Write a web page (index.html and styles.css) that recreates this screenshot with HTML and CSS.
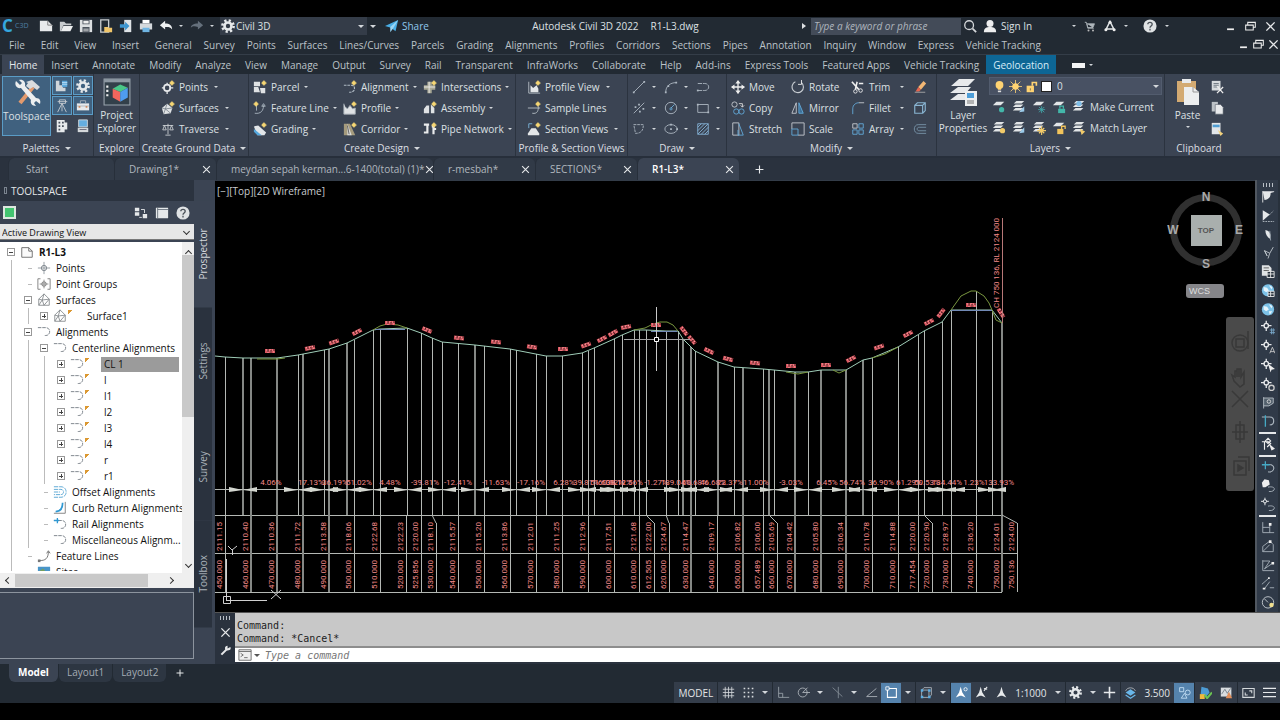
FILE: index.html
```html
<!DOCTYPE html>
<html lang="en">
<head>
<meta charset="utf-8">
<title>Autodesk Civil 3D 2022 - R1-L3.dwg</title>
<link rel="stylesheet" href="styles.css">
</head>
<body>
<svg class="defs" aria-hidden="true">
<symbol id="star" viewBox="0 0 8 8"><circle cx="4" cy="4" r="2.6" fill="#f7d774"/><path d="M4 0v8M0 4h8" stroke="#f7d774" stroke-width=".8"/></symbol>
<symbol id="new" viewBox="0 0 16 16"><path d="M1 2h9l5 5v7H1z" fill="#e8eaec"/><path d="M10 2v5h5" fill="none" stroke="#777"/></symbol>
<symbol id="open" viewBox="0 0 16 16"><path d="M1 14V3h5l2 2h6v2H5L2 14z" fill="#c7cbce"/><path d="M5 8h11l-3 6H2z" fill="#eceeef"/></symbol>
<symbol id="save" viewBox="0 0 16 16"><path d="M1 1h14v14H1z" fill="#dcdfe1"/><path d="M4 1h8v5H4zM4 9h8v6H4z" fill="#4a525c"/><path d="M5 2h6v3H5zM5 11h6v1H5zM5 13h6v1H5z" fill="#eee"/></symbol>
<symbol id="saveweb" viewBox="0 0 16 16"><path d="M2 1h9v14H2z" fill="none" stroke="#c9cdd0" stroke-width="1.5"/><path d="M6 9h4l1 1h4v5H6z" fill="#f0c56a"/></symbol>
<symbol id="import" viewBox="0 0 16 16"><path d="M6 1h8v14H6z" fill="#dfe3e6"/><path d="M1 6h6V3l5 5-5 5v-3H1z" fill="#3d95cf"/></symbol>
<symbol id="print" viewBox="0 0 16 16"><path d="M4 1h8v4H4z" fill="#fff"/><path d="M1 5h14v7H1z" fill="#d5d9dc"/><path d="M4 10h8v5H4z" fill="#6fb4e2"/></symbol>
<symbol id="undo" viewBox="0 0 16 16"><path d="M1 7l6-5v3c5 0 8 2 8 7-2-3-4-3-8-3v3z" fill="#eef0f1"/></symbol>
<symbol id="redo" viewBox="0 0 16 16"><path d="M15 7L9 2v3C4 5 1 7 1 10c2-2 4-2 8-1v3z" fill="#65707c"/></symbol>
<symbol id="gear" viewBox="0 0 16 16"><circle cx="8" cy="8" r="6.400" fill="none" stroke="#e6e9eb" stroke-width="3" stroke-dasharray="2.500 2.526"/><circle cx="8" cy="8" r="4" fill="none" stroke="#e6e9eb" stroke-width="3"/></symbol>
<symbol id="plane" viewBox="0 0 16 16"><path d="M0 8L15 1l-3 13-5-4z" fill="#49aee6"/><path d="M15 1L6 9v6l3-4" fill="#9bd6f5"/></symbol>
<symbol id="mag" viewBox="0 0 16 16"><circle cx="7" cy="7" r="5" fill="none" stroke="#d5d8db" stroke-width="1.5"/><path d="M11 11l4 4" stroke="#d5d8db" stroke-width="2"/></symbol>
<symbol id="user" viewBox="0 0 16 16"><circle cx="8" cy="5" r="4" fill="#eee"/><path d="M1 15c0-5 3-6 7-6s7 1 7 6z" fill="#eee"/></symbol>
<symbol id="cart" viewBox="0 0 16 16"><path d="M1 3h2l2 8h8M4 5h10l-2 5H5z" fill="#aeb5bb" stroke="#aeb5bb"/><circle cx="6" cy="14" r="1.3" fill="#bbb"/><circle cx="12" cy="14" r="1.3" fill="#bbb"/></symbol>
<symbol id="adsk" viewBox="0 0 16 16"><path d="M8 2l5 10H3z" fill="none" stroke="#e3e6e8" stroke-width="2"/><circle cx="8" cy="3" r="2" fill="#eee"/><circle cx="2.500" cy="13" r="2" fill="#eee"/><circle cx="13.500" cy="13" r="2" fill="#eee"/></symbol>
<symbol id="help" viewBox="0 0 16 16"><circle cx="8" cy="8" r="7.500" fill="#dfe2e4"/><path d="M5.500 6c0-3 5-3 5 0 0 2-2.500 2-2.500 4M8 11v2" fill="none" stroke="#4a5158" stroke-width="1.5"/></symbol>
<symbol id="min" viewBox="0 0 16 16"><path d="M3 12h10" stroke="#eee" stroke-width="2.500"/></symbol>
<symbol id="rest" viewBox="0 0 16 16"><path d="M4 5V2h11v7h-3M1 6h11v7H1z" fill="none" stroke="#eee" stroke-width="1.5"/></symbol>
<symbol id="x" viewBox="0 0 16 16"><path d="M2 2l12 12M14 2L2 14" stroke="#e6e8ea" stroke-width="2"/></symbol>
<symbol id="tools" viewBox="0 0 28 28"><path d="M7 24L20 8" stroke="#e39a6d" stroke-width="4"/><path d="M13 3l6-2 8 7-3 3-4-3-3 2-4-3 2-3z" fill="#d9dcde"/><path d="M3 2l4 4 2-2-3-3c4-1 7 2 6 6l11 12c4 0 5 3 4 6l-4-3-2 2 2 3c-4 0-6-3-5-6L8 9C4 10 1 6 3 2z" fill="#eceeef"/></symbol>
<symbol id="prosp" viewBox="0 0 16 16"><path d="M1 2h4v5h4v3h3v4H1z" fill="#cfd5da"/><path d="M8 2h6v7H8z" fill="#5ca9dc"/><path d="M8 4h6M8 6h6" stroke="#b8dcf3"/></symbol>
<symbol id="survey" viewBox="0 0 16 16"><path d="M5 1h7v4H5zM3 3h11M8 5L3 15M8 5l5 10M8 5v9" fill="none" stroke="#c6ccd1"/></symbol>
<symbol id="box" viewBox="0 0 16 16"><path d="M1 5h14v8H1z" fill="#e7eaec"/><path d="M5 5V2h6v3M1 8h14" fill="none" stroke="#aab3bb"/><path d="M3 9h2M11 9h2" stroke="#d18b5f" stroke-width="2"/></symbol>
<symbol id="bldg" viewBox="0 0 16 16"><path d="M2 1h9v3h3v8h-3v3H2z" fill="#e7eaec"/><path d="M4 3h2v2H4zM8 3h2v2H8zM4 7h2v2H4zM8 7h2v2H8zM4 11h2v2H4z" fill="#48515d"/></symbol>
<symbol id="pc" viewBox="0 0 16 16"><path d="M3 1h10v8H3z" fill="#65aee0" stroke="#d4d8db"/><path d="M2 10h12v5H2z" fill="#d4d8db"/><path d="M4 12h8" stroke="#667"/></symbol>
<symbol id="explorer" viewBox="0 0 26 26"><path d="M1 1h24v24H1z" fill="#33404a" stroke="#9aa4ae"/><path d="M1 1h24v3H1z" fill="#8d98a2"/><path d="M3 7h2v2H3zM3 11h2v2H3zM3 15h2v2H3z" fill="#eee"/><path d="M9 10l7-4 7 3-7 4z" fill="#49c788"/><path d="M9 10l7 3v9l-7-4z" fill="#f2665d"/><path d="M16 13l7-4v9l-7 4z" fill="#4f9df0"/></symbol>
<symbol id="point" viewBox="0 0 16 16"><circle cx="7" cy="9" r="3.600" fill="none" stroke="#e5e7e9" stroke-width="2"/><path d="M7 3v3M7 12v4M1 9h3M10 9h4" stroke="#e5e7e9" stroke-width="1.5"/><use href="#star" x="9" width="7" height="7"/></symbol>
<symbol id="surf" viewBox="0 0 16 16"><path d="M1 8l6-5 6 5-2 6-8 1z" fill="#dfe2e4"/><path d="M7 3L5 9l-4-1M5 9l6 5M5 9l8-1M5 9l-2 6" stroke="#6c7580" fill="none" stroke-width=".8"/><use href="#star" x="9" width="7" height="7"/></symbol>
<symbol id="trav" viewBox="0 0 16 16"><path d="M2 4h12M8 2v12M4 4L2 9h4zM12 4l-2 5h4zM5 15h6" fill="none" stroke="#cbd0d4"/></symbol>
<symbol id="parcel" viewBox="0 0 16 16"><path d="M1 2h7v5H1zM1 8h5l2 6H1zM8 9h6v6H9z" fill="#dfe2e4"/><use href="#star" x="9" width="7" height="7"/></symbol>
<symbol id="fline" viewBox="0 0 16 16"><path d="M2 14c7 1 10-3 10-9M4 4v7M12 3l2 3h-4z" fill="none" stroke="#aeb9c3"/><use href="#star" width="7" height="7"/></symbol>
<symbol id="grad" viewBox="0 0 16 16"><path d="M1 5l5-1 9 8-2 3H5z" fill="#e2e6e9"/><path d="M1 8l9 7H5L1 11z" fill="#55a7dd"/><use href="#star" x="9" width="7" height="7"/></symbol>
<symbol id="align" viewBox="0 0 16 16"><path d="M1 6h8q5 0 4 5-1 3-6 3" fill="none" stroke="#aeb9c3" stroke-width="1.300" stroke-dasharray="3 1"/><use href="#star" x="9" width="7" height="7"/></symbol>
<symbol id="prof" viewBox="0 0 16 16"><path d="M1 3v12h13V8l-3 1-3-4-3 4-2-2" fill="#dfe2e4" stroke="#a8b0b7"/><use href="#star" x="9" width="7" height="7"/></symbol>
<symbol id="corr" viewBox="0 0 16 16"><path d="M1 2h7l6 13H1z" fill="#a59b7d"/><path d="M5 2l5 13H5z" fill="#dcdddd"/><path d="M5 4l2 10" stroke="#555"/><use href="#star" x="9" width="7" height="7"/></symbol>
<symbol id="inter" viewBox="0 0 16 16"><path d="M5 2h5v4h4v5h-4v4H5v-4H1V6h4z" fill="#a8a795"/><path d="M7 2v13M1 8h13" stroke="#eee"/><use href="#star" x="9" width="7" height="7"/></symbol>
<symbol id="assem" viewBox="0 0 16 16"><path d="M1 9l3-4h3v9H1zM9 4l4 4v6H9z" fill="#dfe2e4"/><use href="#star" x="9" width="7" height="7"/></symbol>
<symbol id="pipe" viewBox="0 0 16 16"><path d="M1 3h6M5 3v9H1M10 5h2v9M12 8h3" fill="none" stroke="#e9ebec" stroke-width="2.500"/><use href="#star" x="9" width="7" height="7"/></symbol>
<symbol id="pview" viewBox="0 0 16 16"><path d="M2 2v13h13" fill="none" stroke="#b9c1c8"/><path d="M4 14V6l3 3 4-3 2 4v4z" fill="#e3e6e8"/><use href="#star" x="9" width="7" height="7"/></symbol>
<symbol id="sline" viewBox="0 0 16 16"><path d="M1 8h14M6 14c6 1 7-3 7-8" fill="none" stroke="#b9c1c8"/><use href="#star" x="9" width="7" height="7"/></symbol>
<symbol id="sview" viewBox="0 0 16 16"><path d="M1 13l4-6h5l4 6v2H1z" fill="#e3e6e8"/><path d="M2 7V2h4" fill="none" stroke="#7bb6dd"/><use href="#star" x="9" width="7" height="7"/></symbol>
<symbol id="line" viewBox="0 0 16 16"><path d="M2 14L14 2" stroke="#aeb8c2"/><path d="M1 13h2v2H1zM13 1h2v2h-2z" fill="#aeb8c2"/></symbol>
<symbol id="arc" viewBox="0 0 16 16"><path d="M2 14C2 7 7 3 14 3" fill="none" stroke="#aeb8c2"/><path d="M1 13h2v2H1zM13 2h2v2h-2zM4 6h2v2H4z" fill="#aeb8c2"/></symbol>
<symbol id="pline" viewBox="0 0 16 16"><path d="M2 4h8c6 0 6 8 0 8H2" fill="none" stroke="#aeb8c2" stroke-dasharray="5 1"/><path d="M1 11h2v2H1z" fill="#aeb8c2"/></symbol>
<symbol id="divide" viewBox="0 0 16 16"><path d="M2 14L14 2" stroke="#aeb8c2"/><path d="M3 6h2v2H3zM7 3h2v2H7zM8 11h2v2H8zM12 8h2v2h-2z" fill="#aeb8c2"/></symbol>
<symbol id="circ" viewBox="0 0 16 16"><circle cx="8" cy="8" r="6.500" fill="none" stroke="#aeb8c2"/><path d="M8 8l4-4M7 8h2v2H7z" stroke="#6eb1de"/></symbol>
<symbol id="rect" viewBox="0 0 16 16"><path d="M2 4h12v9H2z" fill="none" stroke="#aeb8c2"/><path d="M1 3h2v2H1zM13 12h2v2h-2z" fill="#aeb8c2"/></symbol>
<symbol id="curve" viewBox="0 0 16 16"><path d="M2 3h11c0 7-3 10-9 10z" fill="none" stroke="#aeb8c2" stroke-dasharray="3 1"/></symbol>
<symbol id="ell" viewBox="0 0 16 16"><ellipse cx="8" cy="8" rx="7" ry="5" fill="none" stroke="#aeb8c2"/><path d="M7 7h2v2H7zM7 2h2v2H7zM14 7h2v2h-2z" fill="#aeb8c2"/></symbol>
<symbol id="hatch" viewBox="0 0 16 16"><path d="M2 2h12v12H2zM2 6l4-4M2 10l8-8M2 14L14 2M6 14l8-8M10 14l4-4" fill="none" stroke="#85b4d8"/></symbol>
<symbol id="move" viewBox="0 0 16 16"><path d="M8 1v14M1 8h14" stroke="#eee" stroke-width="1.500"/><path d="M8 0l3 4H5zM8 16l3-4H5zM0 8l4-3v6zM16 8l-4-3v6z" fill="#eee"/></symbol>
<symbol id="copy" viewBox="0 0 16 16"><circle cx="4" cy="4" r="3" fill="none" stroke="#c8cdd2"/><circle cx="6" cy="12" r="3" fill="none" stroke="#63abdc"/><circle cx="12" cy="12" r="3" fill="none" stroke="#63abdc"/><path d="M9 3h4v4m-2-2l2 2 2-2" fill="none" stroke="#ddd"/></symbol>
<symbol id="stretch" viewBox="0 0 16 16"><path d="M2 1h7v14H2z" fill="none" stroke="#c8cdd2"/><path d="M9 2l5 13H8V9" fill="none" stroke="#63abdc"/></symbol>
<symbol id="rot" viewBox="0 0 16 16"><path d="M12 3a6.500 6.500 0 1 1-7-1" fill="none" stroke="#c8cdd2" stroke-width="1.300"/><path d="M12 0v5H8" fill="none" stroke="#eee"/></symbol>
<symbol id="mirror" viewBox="0 0 16 16"><path d="M6 2v12H1z" fill="none" stroke="#c8cdd2"/><path d="M9 2v12h5z" fill="#3e6f96" stroke="#63abdc"/></symbol>
<symbol id="scale" viewBox="0 0 16 16"><path d="M1 8V1h14v14H8" fill="none" stroke="#c8cdd2"/><path d="M1 8h7v7H1z" fill="none" stroke="#63abdc"/></symbol>
<symbol id="trim" viewBox="0 0 16 16"><path d="M1 2l8 9M7 2L5 11M9 4h5" stroke="#eee" stroke-width="1.800"/><circle cx="5" cy="13" r="2" fill="none" stroke="#eee"/><circle cx="11" cy="12" r="2" fill="none" stroke="#eee"/></symbol>
<symbol id="fillet" viewBox="0 0 16 16"><path d="M2 15V9c0-5 4-7 7-7" fill="none" stroke="#63abdc"/><path d="M9 2h6" stroke="#c8cdd2"/></symbol>
<symbol id="array" viewBox="0 0 16 16"><path d="M2 2h5v5H2z" fill="none" stroke="#c8cdd2"/><path d="M9 2h5v5H9zM2 9h5v5H2zM9 9h5v5H9z" fill="none" stroke="#63abdc"/></symbol>
<symbol id="erase" viewBox="0 0 16 16"><path d="M12 1l3 3-6 7-3-3z" fill="#f2b774"/><path d="M6 8l3 3-2 2H3z" fill="#e7654e"/><path d="M2 14h12" stroke="#aaa"/></symbol>
<symbol id="cube" viewBox="0 0 16 16"><path d="M2 5h9v9H2zM2 5l3-3h9v9l-3 3M11 5l3-3" fill="none" stroke="#89b5d2" stroke-width="1.300"/></symbol>
<symbol id="offset" viewBox="0 0 16 16"><path d="M15 3H6c-6 0-6 10 0 10h9M15 6H7c-3 0-3 4 0 4h8" fill="none" stroke="#7895aa"/></symbol>
<symbol id="layer" viewBox="0 0 16 16"><path d="M5 1h9l-3 3H2zM4 5h9l-3 3H1zM4 9h9l-3 3H1z" fill="#e2e5e7"/></symbol>
<symbol id="lay1" viewBox="0 0 16 16"><path d="M5 2h9l-4 4H1z" fill="#e2e5e7"/><circle cx="11" cy="11" r="3" fill="#43b6a9"/></symbol>
<symbol id="lay2" viewBox="0 0 16 16"><use href="#layer"/><path d="M8 14l6-7v6z" fill="#9ccbea"/></symbol>
<symbol id="lay3" viewBox="0 0 16 16"><path d="M5 2h9l-4 4H1z" fill="#e2e5e7"/><path d="M11 7v8M7 11h8M8 8l6 6M14 8l-6 6" stroke="#43a6a9"/></symbol>
<symbol id="lay4" viewBox="0 0 16 16"><path d="M5 2h9l-4 4H1z" fill="#e2e5e7"/><path d="M9 10V7h4v3" fill="none" stroke="#43b6a9" stroke-width="1.500"/><path d="M7 10h8v5H7z" fill="#43b6a9"/></symbol>
<symbol id="lay5" viewBox="0 0 16 16"><use href="#layer"/><circle cx="8" cy="4" r="3" fill="#7fbfea"/></symbol>
<symbol id="lay6" viewBox="0 0 16 16"><use href="#layer"/><circle cx="12" cy="11" r="3" fill="#f2cb6a"/></symbol>
<symbol id="lay9" viewBox="0 0 16 16"><use href="#layer"/><path d="M11 6v10M6 11h10M8 8l6 6M14 8l-6 6" stroke="#f2cb6a" stroke-width="1.300"/></symbol>
<symbol id="lay7" viewBox="0 0 16 16"><path d="M5 2h9l-4 4H1z" fill="#e2e5e7"/><path d="M11 9V6h4v3" fill="none" stroke="#f2c45b" stroke-width="1.500"/><path d="M6 9h7v6H6z" fill="#f2c45b"/></symbol>
<symbol id="lay8" viewBox="0 0 16 16"><use href="#layer"/><path d="M9 9l6 3-4 4z" fill="#f2cb6a"/></symbol>
<symbol id="laybig" viewBox="0 0 28 28"><path d="M10 1h16l-7 7H2zM9 9h13l-5 6H1zM9 16h8v6H1z" fill="#e8eaec"/><path d="M16 13h12v15H16z" fill="#eef0f1"/><path d="M18 15h7v5h-7z" fill="#4e9ed8"/><path d="M18 23h7M18 25h7" stroke="#777"/></symbol>
<symbol id="bulb" viewBox="0 0 16 16"><circle cx="8" cy="6" r="4.800" fill="#ffd372"/><path d="M6 9h4v3H6z" fill="#ffd372"/><path d="M6 13h4v2H6z" fill="#ddd"/></symbol>
<symbol id="sun" viewBox="0 0 16 16"><circle cx="8" cy="8" r="4" fill="#ffd372"/><path d="M8 0v16M0 8h16M2 2l12 12M14 2L2 14" stroke="#ffd372"/></symbol>
<symbol id="unlock" viewBox="0 0 16 16"><path d="M9 7V3h5v4" fill="none" stroke="#ffd372" stroke-width="2"/><path d="M2 7h9v8H2z" fill="#ffd372"/><path d="M6 10h1v3H6z" fill="#665"/></symbol>
<symbol id="paste" viewBox="0 0 24 28"><path d="M1 3h19v21H1z" fill="#d3aa72"/><path d="M6 1h9v4H6z" fill="#e8eaec"/><path d="M8 9h9l6 5v13H8z" fill="#eceeef"/><path d="M17 9v5h6" fill="none" stroke="#999"/></symbol>
<symbol id="cut" viewBox="0 0 16 16"><path d="M2 1h10v11H2z" fill="#d7dbde"/><path d="M4 4h6M4 6h6M4 8h5" stroke="#68717c"/><path d="M8 7l7 8M15 8l-7 7" stroke="#eee" stroke-width="1.500"/></symbol>
<symbol id="dup" viewBox="0 0 16 16"><path d="M2 1h7v11H2z" fill="#bcc2c7"/><path d="M6 4h6l3 3v8H6z" fill="#e8eaec" stroke="#4b535f" stroke-width=".6"/></symbol>
<symbol id="matchp" viewBox="0 0 16 16"><path d="M2 1h10v13H2z" fill="#e1e5e8"/><path d="M3 3h8v3H3z" fill="#4f9dd3"/><path d="M9 9l6 4-3 3z" fill="#f2d27d"/></symbol>
<symbol id="t-point" viewBox="0 0 16 16"><circle cx="8" cy="8" r="3" fill="none" stroke="#6c757d"/><path d="M8 1v14M1 8h14" stroke="#8b939a"/></symbol>
<symbol id="t-pg" viewBox="0 0 16 16"><path d="M4 2H1v12h3M12 2h3v12h-3" fill="none" stroke="#777"/><circle cx="8" cy="8" r="2.500" fill="none" stroke="#666"/><path d="M8 3v10M3 8h10" stroke="#888"/></symbol>
<symbol id="t-surf" viewBox="0 0 16 16"><path d="M2 7l6-6 6 6v7H2zM8 1L6 8l-4-1M6 8l8-1M6 8l2 6M6 8l-4 6M14 7l-6 7" fill="none" stroke="#85898d"/></symbol>
<symbol id="t-al" viewBox="0 0 16 16"><path d="M1 3h9c6 0 6 9 0 9H8" fill="none" stroke="#717981" stroke-dasharray="4 1"/></symbol>
<symbol id="t-rail" viewBox="0 0 16 16"><path d="M1 4h9c6 0 6 9 0 9H8" fill="none" stroke="#717981" stroke-dasharray="4 1"/><path d="M1 4h6M5 1v6" stroke="#2f98d2" stroke-width="1.500"/></symbol>
<symbol id="t-off" viewBox="0 0 16 16"><path d="M1 2h8c8 0 8 12 0 12H1M1 5h8c4 0 4 6 0 6H1M1 8h7" fill="none" stroke="#4c9fd0" stroke-dasharray="5 1"/></symbol>
<symbol id="t-curb" viewBox="0 0 16 16"><path d="M14 1v13H1" fill="none" stroke="#777"/><path d="M3 12c6 0 8-4 8-10" fill="none" stroke="#2f98d2" stroke-width="2"/></symbol>
<symbol id="t-fl" viewBox="0 0 16 16"><path d="M2 13c8 1 11-3 11-10M11 5l2-3 2 3" fill="none" stroke="#666"/><path d="M1 12h3v3H1z" fill="#777"/></symbol>
<symbol id="t-site" viewBox="0 0 16 16"><path d="M1 2h14v13H1z" fill="#4995c8"/><path d="M1 8l6-4 4 5 4-1v7H1z" fill="#77a05c"/></symbol>
<symbol id="t-doc" viewBox="0 0 16 16"><path d="M2 3h8l4 4v7H2zM10 3v4h4" fill="#fafafa" stroke="#666"/></symbol>
<symbol id="panes" viewBox="0 0 16 16"><path d="M1 2h5v4H1zM1 7h5v4H1zM10 9h5v5h-5z" fill="#e5e8ea"/><path d="M8 4h4v4M6 13h3" fill="none" stroke="#e5e8ea"/></symbol>
<symbol id="panorama" viewBox="0 0 16 16"><path d="M1 2h14v12H1z" fill="#e5e8ea"/><path d="M3 2v12M3 4h12" stroke="#68717c"/></symbol>
<symbol id="wrench" viewBox="0 0 16 16"><path d="M2 14l8-8" stroke="#e6e8ea" stroke-width="3"/><path d="M15 3l-4 2 0-4C6 1 6 8 11 8s5-3 4-5z" fill="#e6e8ea"/></symbol>
<symbol id="prompt" viewBox="0 0 16 16"><path d="M1 2h14v12H1z" fill="#eee" stroke="#666"/><path d="M1 4h14M3 6l3 2-3 2M7 11h4" fill="none" stroke="#666"/></symbol>
<symbol id="r1" viewBox="0 0 16 16"><path d="M2 2h13v1l-4 1c0 5-2 7-7 8z" fill="#e6e8ea"/><path d="M2 2v13" stroke="#eee"/></symbol>
<symbol id="r2" viewBox="0 0 16 16"><path d="M2 2l8 5-8 7z" fill="#e6e8ea"/><path d="M9 8l5-5M2 15h13" stroke="#b4bcc3" stroke-dasharray="2 1"/></symbol>
<symbol id="r3" viewBox="0 0 16 16"><path d="M5 3c5 1 7 5 5 10-3-2-5-5-5-10z" fill="#e6e8ea"/><path d="M10 4l1 11" stroke="#9ba6b0"/></symbol>
<symbol id="r4" viewBox="0 0 16 16"><path d="M4 6l6 3 4-7M10 9l-2 6M4 6l3 6z" fill="none" stroke="#c5ccd1"/></symbol>
<symbol id="r5" viewBox="0 0 16 16"><path d="M1 1h8l3 3v9H1z" fill="#dfe2e4"/><path d="M3 4h6M3 7h6" stroke="#555"/><path d="M7 8h8v7H7zM11 8v7M7 11h8" fill="#26303b" stroke="#eee"/></symbol>
<symbol id="globe" viewBox="0 0 16 16"><circle cx="8" cy="8" r="7" fill="#7cc2e8"/><path d="M3 4l4 1 2 3-3 2-3-2zM9 2l4 2-1 3zM9 10l4 0-3 4z" fill="#e5f4fc"/></symbol>
<symbol id="globeg" viewBox="0 0 16 16"><use href="#globe"/><path d="M8 9h7v6H8zM11 9v6M8 12h7" fill="#26303b" stroke="#eee"/></symbol>
<symbol id="pt" viewBox="0 0 16 16"><circle cx="6" cy="6" r="2.500" fill="none" stroke="#e6e8ea" stroke-width="1.500"/><path d="M6 0v4M6 8v4M0 6h4M8 6h4" stroke="#e6e8ea" stroke-width="1.500"/></symbol>
<symbol id="pt1" viewBox="0 0 16 16"><use href="#pt"/><path d="M10 11h6M10 14h6M12 9v7M14 9v7" stroke="#78a7c8"/></symbol>
<symbol id="pt2" viewBox="0 0 16 16"><use href="#pt"/><path d="M10 16l3-7 3 7M11 14h4" fill="none" stroke="#ccc"/></symbol>
<symbol id="pt3" viewBox="0 0 16 16"><use href="#pt"/><path d="M8 6l8 6-4 1-1 3z" fill="#eee"/></symbol>
<symbol id="pt4" viewBox="0 0 16 16"><use href="#pt"/><circle cx="12" cy="12" r="3" fill="none" stroke="#ccc" stroke-width="1.500"/></symbol>
<symbol id="flagp" viewBox="0 0 16 16"><path d="M3 2v13M3 3h11v6l-5 3H3" fill="#53606c" stroke="#b7bfc6"/><circle cx="9" cy="7" r="2" fill="none" stroke="#ddd"/></symbol>
<symbol id="ralign" viewBox="0 0 16 16"><path d="M1 3h9c6 0 6 9 0 9" fill="none" stroke="#aab4bd" stroke-width="1.300"/><path d="M5 1v13" stroke="#45a9c4" stroke-width="1.500"/></symbol>
<symbol id="ralign2" viewBox="0 0 16 16"><path d="M7 5c11-2 9 10 1 8" fill="none" stroke="#aab4bd" stroke-width="1.300"/><path d="M5 1v9M1 5h9" stroke="#45a9c4" stroke-width="1.500"/></symbol>
<symbol id="rpeople" viewBox="0 0 16 16"><path d="M1 5h5M4 5v9M7 4l4 3-4 4M8 1l3 3-3 3-3-3z" fill="none" stroke="#eee" stroke-width="1.300"/><path d="M9 7l7 6-4 2z" fill="#eee"/></symbol>
<symbol id="blob" viewBox="0 0 16 16"><path d="M1 5l3-4 5 1 1 5-5 3H2z" fill="#eee"/><path d="M8 10c10-2 9 6 1 5" fill="none" stroke="#aab4bd"/></symbol>
<symbol id="ptal" viewBox="0 0 16 16"><use href="#pt" width="12" height="12"/><path d="M8 10c10-2 9 6 1 5" fill="none" stroke="#aab4bd"/></symbol>
<symbol id="d1" viewBox="0 0 16 16"><path d="M2 2v12h13M2 8h8V4M10 14V8" fill="none" stroke="#aab4bd"/><path d="M9 3h3v3H9z" fill="#eee"/></symbol>
<symbol id="d2" viewBox="0 0 16 16"><path d="M2 14V8l8-6 4 4v8zM2 14l8-8" fill="none" stroke="#aab4bd"/><path d="M9 1h3v3H9z" fill="#eee"/></symbol>
<symbol id="d3" viewBox="0 0 16 16"><path d="M2 2v12h13M2 3h8L4 12l10-7" fill="none" stroke="#aab4bd"/><path d="M12 4h3v3h-3z" fill="#eee"/></symbol>
<symbol id="d4" viewBox="0 0 16 16"><path d="M1 9l8-7M4 14l6-8M10 13h5" fill="none" stroke="#aab4bd"/><path d="M8 1h2v2H8zM2 13h3v2H2z" fill="#eee"/></symbol>
<symbol id="d5" viewBox="0 0 16 16"><circle cx="8" cy="8" r="6.500" fill="none" stroke="#cbd1d6"/><path d="M8 8L4 4" stroke="#cbd1d6"/><circle cx="12" cy="11" r="2.500" fill="#f1e08f"/></symbol>
<symbol id="s-grid" viewBox="0 0 16 16"><path d="M4 1v14M8 1v14M12 1v14M1 4h14M1 8h14M1 12h14" stroke="#d5d9dc"/></symbol>
<symbol id="s-dots" viewBox="0 0 16 16"><path d="M2 3h12M2 8h12M2 13h12" stroke="#d5d9dc" stroke-width="2" stroke-dasharray="2 3"/></symbol>
<symbol id="s-ortho" viewBox="0 0 16 16"><path d="M2 1v13h13M2 9h5v5" fill="none" stroke="#9ea7af"/></symbol>
<symbol id="s-polar" viewBox="0 0 16 16"><circle cx="7" cy="8" r="5.500" fill="none" stroke="#b6bdc3"/><path d="M7 8h9M7 8l6-6" stroke="#b6bdc3"/></symbol>
<symbol id="s-iso" viewBox="0 0 16 16"><path d="M9 1v14M2 2l12 11" stroke="#89929b"/></symbol>
<symbol id="s-otrk" viewBox="0 0 16 16"><path d="M14 3L2 13h13" fill="none" stroke="#b6bdc3"/></symbol>
<symbol id="s-osnap" viewBox="0 0 16 16"><path d="M3 3h11v11H3z" fill="none" stroke="#fff" stroke-width="1.300"/><path d="M1 1h4v4H1z" fill="#5583ad" stroke="#fff"/></symbol>
<symbol id="s-3d" viewBox="0 0 16 16"><path d="M2 5h9v9H2zM2 5l3-3h9v9l-3 3" fill="none" stroke="#b6bdc3"/><path d="M1 4h3v3H1zM10 12h3v3h-3zM1 12h3v3H1zM10 4h3v3h-3z" fill="#5caee2"/></symbol>
<symbol id="s-anno" viewBox="0 0 16 16"><path d="M8 1l2 7 4 6-5-2H7l-5 2 4-6z" fill="#e6e9eb"/></symbol>
<symbol id="s-annop" viewBox="0 0 16 16"><path d="M7 1l2 7 4 6-5-2H6l-5 2 4-6z" fill="#e6e9eb"/><path d="M11 6l4-5M11 3l4 1" stroke="#e6e9eb" stroke-width="1.300"/></symbol>
<symbol id="s-annoo" viewBox="0 0 16 16"><path d="M7 1l2 7 4 6-5-2H6l-5 2 4-6z" fill="#fff"/><circle cx="13" cy="4" r="2" fill="none" stroke="#fff"/></symbol>
<symbol id="s-plus" viewBox="0 0 16 16"><path d="M8 1v14M1 8h14" stroke="#e6e9eb" stroke-width="2"/></symbol>
<symbol id="s-elev" viewBox="0 0 16 16"><path d="M2 6c2-5 10-5 12 0" fill="none" stroke="#b6bdc3"/><path d="M8 4l6 4-6 4-6-4z" fill="#69b7ea"/><path d="M2 11l6 4 6-4" fill="none" stroke="#69b7ea" stroke-width="1.500"/></symbol>
<symbol id="s-geo" viewBox="0 0 16 16"><path d="M2 2h5v5H2zM8 9l3 6H4z" fill="none" stroke="#cce6fa"/><circle cx="12" cy="8" r="3" fill="none" stroke="#cce6fa"/></symbol>
<symbol id="s-map" viewBox="0 0 16 16"><path d="M3 1l8 2 2 5-4 5-7-3z" fill="#4d9bd4"/><path d="M1 10h6v6H1z" fill="#efb83e"/><path d="M7 11l3 4 6-7" fill="none" stroke="#6bc352" stroke-width="2.500"/></symbol>
<symbol id="s-graph" viewBox="0 0 16 16"><path d="M1 2h13v11H1z" fill="#d8dcdf"/><path d="M2 10l4-6 3 5 4-6" fill="none" stroke="#66717b"/><path d="M11 7l4 8H7z" fill="#e08d59"/></symbol>
<symbol id="s-full" viewBox="0 0 16 16"><path d="M1 3h14v11H1zM9 6h3v3M7 11H4V8" fill="none" stroke="#d5d9dc" stroke-width="1.300"/></symbol>
<symbol id="s-menu" viewBox="0 0 16 16"><path d="M0 3h16M0 8h16M0 13h16" stroke="#e6e9eb" stroke-width="1.500"/></symbol>
</svg>

<div class="app">
<header class="titlebar">
  <button class="logo" aria-label="Application menu"><b>C</b><small>C3D</small></button>
  <div class="quick">
    <button aria-label="New"><svg><use href="#new"/></svg></button><button aria-label="Open"><svg><use href="#open"/></svg></button><button aria-label="Save"><svg><use href="#save"/></svg></button><button aria-label="Save to web"><svg><use href="#saveweb"/></svg></button><button aria-label="Import"><svg><use href="#import"/></svg></button><button aria-label="Plot"><svg><use href="#print"/></svg></button>
    <button aria-label="Undo"><svg><use href="#undo"/></svg></button><i class="c"></i><button aria-label="Redo"><svg><use href="#redo"/></svg></button><i class="c"></i>
  </div>
  <label class="workspace"><svg><use href="#gear"/></svg><select aria-label="Workspace"><option>Civil 3D</option></select><i class="c big"></i></label>
  <i class="c big bar"></i>
  <button class="share"><svg><use href="#plane"/></svg>Share</button>
  <div class="doc"><span>Autodesk Civil 3D 2022</span><span>R1-L3.dwg</span></div>
  <i class="play"></i>
  <input class="search" placeholder="Type a keyword or phrase" aria-label="Search">
  <div class="account"><svg><use href="#mag"/></svg><button><svg><use href="#user"/></svg>Sign In</button></div>
  <div class="apps"><i class="c"></i><svg><use href="#cart"/></svg><svg><use href="#adsk"/></svg><i class="c"></i><svg class="sep"><use href="#help"/></svg><i class="c"></i></div>
  <div class="win"><button aria-label="Minimize"><svg><use href="#min"/></svg></button><button aria-label="Restore"><svg><use href="#rest"/></svg></button><button aria-label="Close"><svg><use href="#x"/></svg></button></div>
</header>
<nav class="menubar">
  <div class="menus"><a href="#">File</a><a href="#">Edit</a><a href="#">View</a><a href="#">Insert</a><a href="#">General</a><a href="#">Survey</a><a href="#">Points</a><a href="#">Surfaces</a><a href="#">Lines/Curves</a><a href="#">Parcels</a><a href="#">Grading</a><a href="#">Alignments</a><a href="#">Profiles</a><a href="#">Corridors</a><a href="#">Sections</a><a href="#">Pipes</a><a href="#">Annotation</a><a href="#">Inquiry</a><a href="#">Window</a><a href="#">Express</a><a href="#">Vehicle Tracking</a></div>
  <div class="win small"><button aria-label="Minimize drawing"><svg><use href="#min"/></svg></button><button aria-label="Restore drawing"><svg><use href="#rest"/></svg></button><button aria-label="Close drawing"><svg><use href="#x"/></svg></button></div>
</nav>
<nav class="rtabs"><div class="tabs"><a class="on" href="#">Home</a><a href="#">Insert</a><a href="#">Annotate</a><a href="#">Modify</a><a href="#">Analyze</a><a href="#">View</a><a href="#">Manage</a><a href="#">Output</a><a href="#">Survey</a><a href="#">Rail</a><a href="#">Transparent</a><a href="#">InfraWorks</a><a href="#">Collaborate</a><a href="#">Help</a><a href="#">Add-ins</a><a href="#">Express Tools</a><a href="#">Featured Apps</a><a href="#">Vehicle Tracking</a><a class="geo" href="#">Geolocation</a></div><button class="pill" aria-label="Minimize ribbon"></button><i class="c"></i></nav>

<section class="ribbon">
  <div class="panel palettes"><div class="body">
    <button class="large on"><svg><use href="#tools"/></svg>Toolspace</button>
    <div class="six"><button class="on" aria-label="Prospector"><svg><use href="#prosp"/></svg></button><button class="on" aria-label="Settings"><svg><use href="#gear"/></svg></button><button class="on" aria-label="Survey"><svg><use href="#survey"/></svg></button><button class="on" aria-label="Toolbox"><svg><use href="#box"/></svg></button><button aria-label="Properties"><svg><use href="#bldg"/></svg></button><button aria-label="Tool palettes"><svg><use href="#pc"/></svg></button></div>
  </div><h2>Palettes <i class="c big"></i></h2></div>
  <div class="panel explore"><div class="body"><button class="large"><svg><use href="#explorer"/></svg>Project<br>Explorer</button></div><h2>Explore</h2></div>
  <div class="panel ground"><div class="body grid"><button><svg><use href="#point"/></svg>Points<i class="c"></i></button><button><svg><use href="#surf"/></svg>Surfaces<i class="c"></i></button><button><svg><use href="#trav"/></svg>Traverse<i class="c"></i></button></div><h2>Create Ground Data <i class="c big"></i></h2></div>
  <div class="panel design"><div class="body grid"><button><svg><use href="#parcel"/></svg>Parcel<i class="c"></i></button><button><svg><use href="#fline"/></svg>Feature Line<i class="c"></i></button><button><svg><use href="#grad"/></svg>Grading<i class="c"></i></button><button><svg><use href="#align"/></svg>Alignment<i class="c"></i></button><button><svg><use href="#prof"/></svg>Profile<i class="c"></i></button><button><svg><use href="#corr"/></svg>Corridor<i class="c"></i></button><button><svg><use href="#inter"/></svg>Intersections<i class="c"></i></button><button><svg><use href="#assem"/></svg>Assembly<i class="c"></i></button><button><svg><use href="#pipe"/></svg>Pipe Network<i class="c"></i></button></div><h2>Create Design <i class="c big"></i></h2></div>
  <div class="panel views"><div class="body grid"><button><svg><use href="#pview"/></svg>Profile View<i class="c"></i></button><button><svg><use href="#sline"/></svg>Sample Lines</button><button><svg><use href="#sview"/></svg>Section Views<i class="c"></i></button></div><h2>Profile &amp; Section Views</h2></div>
  <div class="panel draw"><div class="body grid"><button aria-label="Line"><svg><use href="#line"/></svg><i class="c"></i></button><button aria-label="Divide"><svg><use href="#divide"/></svg><i class="c"></i></button><button aria-label="Curve"><svg><use href="#curve"/></svg><i class="c"></i></button><button aria-label="Arc"><svg><use href="#arc"/></svg><i class="c"></i></button><button aria-label="Circle"><svg><use href="#circ"/></svg><i class="c"></i></button><button aria-label="Ellipse"><svg><use href="#ell"/></svg><i class="c"></i></button><button aria-label="Polyline"><svg><use href="#pline"/></svg></button><button aria-label="Rectangle"><svg><use href="#rect"/></svg><i class="c"></i></button><button aria-label="Hatch"><svg><use href="#hatch"/></svg><i class="c"></i></button></div><h2>Draw <i class="c big"></i></h2></div>
  <div class="panel modify"><div class="body grid"><button><svg><use href="#move"/></svg>Move</button><button><svg><use href="#copy"/></svg>Copy</button><button><svg><use href="#stretch"/></svg>Stretch</button><button><svg><use href="#rot"/></svg>Rotate</button><button><svg><use href="#mirror"/></svg>Mirror</button><button><svg><use href="#scale"/></svg>Scale</button><button class="split"><svg><use href="#trim"/></svg>Trim<i class="c"></i></button><button class="split"><svg><use href="#fillet"/></svg>Fillet<i class="c"></i></button><button class="split"><svg><use href="#array"/></svg>Array<i class="c"></i></button><button aria-label="Erase"><svg><use href="#erase"/></svg></button><button aria-label="Explode"><svg><use href="#cube"/></svg></button><button aria-label="Offset"><svg><use href="#offset"/></svg></button></div><h2>Modify <i class="c big"></i></h2></div>
  <div class="panel layers"><div class="body"><button class="large"><svg><use href="#laybig"/></svg>Layer<br>Properties</button>
    <div class="stack"><label class="layersel"><svg><use href="#bulb"/></svg><svg><use href="#sun"/></svg><svg><use href="#unlock"/></svg><span class="swatch"></span><select aria-label="Layer"><option>0</option></select><i class="c big"></i></label>
    <div class="icons"><button aria-label="Off"><svg><use href="#lay1"/></svg></button><button aria-label="Isolate"><svg><use href="#lay2"/></svg></button><button aria-label="Freeze"><svg><use href="#lay3"/></svg></button><button aria-label="Lock"><svg><use href="#lay4"/></svg></button><button><svg><use href="#lay5"/></svg>Make Current</button></div>
    <div class="icons"><button aria-label="Turn all on"><svg><use href="#lay6"/></svg></button><button aria-label="Unisolate"><svg><use href="#lay2"/></svg></button><button aria-label="Thaw"><svg><use href="#lay9"/></svg></button><button aria-label="Unlock"><svg><use href="#lay7"/></svg></button><button><svg><use href="#lay8"/></svg>Match Layer</button></div></div>
  </div><h2>Layers <i class="c big"></i></h2></div>
  <div class="panel clip"><div class="body"><button class="large"><svg><use href="#paste"/></svg>Paste<i class="c"></i></button><div class="grid"><button aria-label="Cut"><svg><use href="#cut"/></svg></button><button aria-label="Copy clip"><svg><use href="#dup"/></svg></button><button aria-label="Match properties"><svg><use href="#matchp"/></svg></button></div></div><h2>Clipboard</h2></div>
</section>

<nav class="filetabs"><a class="start" href="#">Start</a><a href="#">Drawing1*<svg><use href="#x"/></svg></a><a class="long" href="#">meydan sepah kerman...6-1400(total) (1)*<svg><use href="#x"/></svg></a><a href="#">r-mesbah*<svg><use href="#x"/></svg></a><a href="#">SECTIONS*<svg><use href="#x"/></svg></a><a class="on" href="#">R1-L3*<svg><use href="#x"/></svg></a><button aria-label="New drawing"><svg><use href="#s-plus"/></svg></button></nav>

<main class="work">
  <aside class="toolspace">
    <div class="pane">
      <h1><i></i>TOOLSPACE</h1>
      <div class="tsbar"><span class="green"></span><svg class="push"><use href="#panes"/></svg><svg><use href="#panorama"/></svg><svg><use href="#help"/></svg></div>
      <label class="view"><select aria-label="View"><option>Active Drawing View</option></select><i class="chev down"></i></label>
      <div class="treebox">
        <ul class="tree">
          <li class="l0"><i class="e"></i><svg><use href="#t-doc"/></svg><b>R1-L3</b></li>
          <li class="l1"><i class="e n"></i><svg><use href="#t-point"/></svg>Points</li>
          <li class="l1"><i class="e n"></i><svg><use href="#t-pg"/></svg>Point Groups</li>
          <li class="l1"><i class="e"></i><svg><use href="#t-surf"/></svg>Surfaces</li>
          <li class="l2"><i class="e p"></i><svg><use href="#t-surf"/></svg><i class="f"></i>Surface1</li>
          <li class="l1"><i class="e"></i><svg><use href="#t-al"/></svg>Alignments</li>
          <li class="l2"><i class="e"></i><svg><use href="#t-al"/></svg>Centerline Alignments</li>
          <li class="l3"><i class="e p"></i><svg><use href="#t-al"/></svg><i class="f"></i><span class="sel">CL 1</span></li>
          <li class="l3"><i class="e p"></i><svg><use href="#t-al"/></svg><i class="f"></i>l</li>
          <li class="l3"><i class="e p"></i><svg><use href="#t-al"/></svg><i class="f"></i>l1</li>
          <li class="l3"><i class="e p"></i><svg><use href="#t-al"/></svg><i class="f"></i>l2</li>
          <li class="l3"><i class="e p"></i><svg><use href="#t-al"/></svg><i class="f"></i>l3</li>
          <li class="l3"><i class="e p"></i><svg><use href="#t-al"/></svg><i class="f"></i>l4</li>
          <li class="l3"><i class="e p"></i><svg><use href="#t-al"/></svg><i class="f"></i>r</li>
          <li class="l3"><i class="e p"></i><svg><use href="#t-al"/></svg><i class="f"></i>r1</li>
          <li class="l2"><i class="e n"></i><svg><use href="#t-off"/></svg>Offset Alignments</li>
          <li class="l2"><i class="e n"></i><svg><use href="#t-curb"/></svg>Curb Return Alignments</li>
          <li class="l2"><i class="e n"></i><svg><use href="#t-rail"/></svg>Rail Alignments</li>
          <li class="l2"><i class="e n"></i><svg><use href="#t-al"/></svg>Miscellaneous Alignm...</li>
          <li class="l1"><i class="e n"></i><svg><use href="#t-fl"/></svg>Feature Lines</li>
          <li class="l1"><i class="e n"></i><svg><use href="#t-site"/></svg>Sites</li>
        </ul>
        <div class="vbar"><i class="chev up"></i><span></span><i class="chev down"></i></div>
      </div>
      <div class="hbar"><i class="chev left"></i><span></span><i class="chev right"></i></div>
      <div class="preview"></div>
    </div>
    <div class="side"><button class="on">Prospector</button><button>Settings</button><button>Survey</button><button>Toolbox</button></div>
  </aside>
  <div class="center">
    <div class="upper">
      <div class="canvas">
        <span class="vp">[−][Top][2D Wireframe]</span>
        <svg id="plot" viewBox="0 0 1040 430" preserveAspectRatio="xMinYMin meet" role="img" aria-label="Longitudinal profile"></svg>
        <div class="cube"><span class="n">N</span><span class="w">W</span><button>TOP</button><span class="ea">E</span><span class="s">S</span></div>
        <button class="wcs">WCS</button>
        <div class="navbar"><svg viewBox="0 0 28 174" fill="none" stroke="#393939" stroke-width="1.500"><circle cx="14" cy="26" r="8"/><path d="M10 22h8v8h-8zM22 14v18M8 64l-2-6 3 2v-6h2v6-8h2v8-8h2v8l3-5v12l-4 3zM6 74l16 16M22 74L6 90M14 104v22M6 115h16M10 108h8v14h-8zM8 144h12v14H8zM12 140h11v14"/><path d="M12 148l5 3-5 3z" fill="#393939"/></svg></div>
      </div>
      <div class="rbar"><i class="grip"></i><svg><use href="#r1"/></svg><svg><use href="#r2"/></svg><svg><use href="#r3"/></svg><svg><use href="#r4"/></svg><svg><use href="#r5"/></svg><svg><use href="#globeg"/></svg><svg><use href="#globe"/></svg><svg><use href="#pt1"/></svg><svg><use href="#pt2"/></svg><svg><use href="#pt3"/></svg><svg><use href="#pt4"/></svg><svg><use href="#flagp"/></svg><svg><use href="#ralign"/></svg><hr><svg><use href="#rpeople"/></svg><hr><svg><use href="#ralign2"/></svg><svg><use href="#blob"/></svg><svg><use href="#ptal"/></svg><hr><svg><use href="#d1"/></svg><svg><use href="#d2"/></svg><svg><use href="#d3"/></svg><svg><use href="#d4"/></svg><svg><use href="#d5"/></svg></div>
    </div>
    <div class="cmd"><div class="cmdtools"><i class="grip"></i><button aria-label="Close"><svg><use href="#x"/></svg></button><button aria-label="Customize"><svg><use href="#wrench"/></svg></button></div>
      <div class="cmdmain"><div class="history"><p>Command:</p><p>Command: *Cancel*</p></div><label class="entry"><svg><use href="#prompt"/></svg><i class="c big"></i><input placeholder="Type a command" aria-label="Command"></label></div></div>
  </div>
</main>
<nav class="layouts"><a class="on" href="#">Model</a><a href="#">Layout1</a><a href="#">Layout2</a><button aria-label="New layout"><svg><use href="#s-plus"/></svg></button></nav>
<footer class="status">
  <div><button class="txt">MODEL</button></div>
  <div><button aria-label="Grid"><svg><use href="#s-grid"/></svg></button><button aria-label="Snap"><svg><use href="#s-dots"/></svg></button><i class="c big"></i></div>
  <div><button aria-label="Ortho"><svg><use href="#s-ortho"/></svg></button><button aria-label="Polar"><svg><use href="#s-polar"/></svg></button><i class="c big"></i><button aria-label="Isodraft"><svg><use href="#s-iso"/></svg></button><i class="c big"></i><button aria-label="Tracking"><svg><use href="#s-otrk"/></svg></button><button class="on" aria-label="Object snap"><svg><use href="#s-osnap"/></svg></button><i class="c big"></i></div>
  <div><button aria-label="3D snap"><svg><use href="#s-3d"/></svg></button><i class="c big"></i></div>
  <div><button class="on" aria-label="Annotation visibility"><svg><use href="#s-annoo"/></svg></button><button aria-label="Auto scale"><svg><use href="#s-annop"/></svg></button><button aria-label="Annotation scale"><svg><use href="#s-anno"/></svg></button><button class="txt">1:1000</button><i class="c big"></i></div>
  <div><button aria-label="Workspace"><svg><use href="#gear"/></svg></button><i class="c big"></i><button aria-label="Annotation monitor"><svg><use href="#s-plus"/></svg></button></div>
  <div><button aria-label="Elevation"><svg><use href="#s-elev"/></svg></button><button class="txt">3.500</button><button class="on" aria-label="Isolate objects"><svg><use href="#s-geo"/></svg></button></div>
  <div class="wide"><button aria-label="Geolocation"><svg><use href="#s-map"/></svg></button><button aria-label="Graphics"><svg><use href="#s-graph"/></svg></button></div>
  <div class="wide"><button aria-label="Clean screen"><svg><use href="#s-full"/></svg></button><button aria-label="Customization"><svg><use href="#s-menu"/></svg></button></div>
</footer>
</div>
<script src="app.js"></script>
</body>
</html>
```

FILE: styles.css
```css
* { box-sizing: border-box; }
body { margin: 0; background: #000; color: #dde0e3; font: 10px/16px "Open Sans", "Noto Sans", sans-serif; }
button, input, select { font: inherit; color: inherit; background: none; border: 0; padding: 0; margin: 0; appearance: none; outline: 0; }
a { color: inherit; text-decoration: none; }
h1, h2, p, ul, hr { margin: 0; padding: 0; font: inherit; border: 0; list-style: none; }
svg { width: 14px; height: 14px; flex: none; display: block; }
.defs { position: absolute; width: 0; height: 0; }
.app { min-height: 100vh; display: flex; flex-direction: column; border: solid #000; border-width: 17px 0; background: #222a33; white-space: nowrap; }
.c { flex: none; width: 0; height: 0; border: 2px solid transparent; border-top-color: #d3d7db; border-bottom: 0; }
.c.big { border-width: 3px; border-bottom: 0; }

.titlebar { height: 18px; display: flex; align-items: center; }
.logo { width: 39px; display: flex; align-items: center; padding-left: 2px; color: #35a7df; }
.logo b { font-size: 17px; width: 13px; text-align: left; }
.logo small { font-size: 7px; line-height: 8px; color: #4e7fa5; }
.quick { display: flex; align-items: center; gap: 6px; width: 181px; }
.quick .c { margin-right: 1px; }
.workspace { display: flex; align-items: center; background: #343c48; height: 18px; width: 147px; padding: 0 3px 0 1px; gap: 1px; }
.workspace select { flex: 1; height: 16px; }
.bar { margin: 0 9px 0 3px; }
.share { display: flex; align-items: center; gap: 3px; color: #8fc8ee; }
.doc { flex: 1; display: flex; justify-content: center; gap: 12px; }
.play { border: 3px solid transparent; border-left: 4px solid #dde0e2; border-right: 0; margin-right: 5px; }
.search { width: 150px; height: 17px; background: #434b58; padding-left: 3px; }
.search::placeholder { color: #aeb5bd; font-style: italic; opacity: 1; }
.account { display: flex; gap: 6px; padding-left: 2px; width: 111px; align-items: center; }
.account button { display: flex; align-items: center; gap: 4px; }
.apps { width: 153px; display: flex; align-items: center; gap: 8px; }
.apps svg { width: 12px; height: 12px; }
.apps .sep { width: 14px; height: 14px; margin-left: 7px; }
.win { display: flex; gap: 9px; margin-left: auto; padding-right: 4px; }
.win svg { width: 11px; height: 11px; }
.win.small { gap: 4px; padding-right: 1px; }

.menubar { height: 20px; display: flex; align-items: center; border-bottom: 1px solid #343d48; color: #bcc2c8; }
.menus { display: flex; width: 1050px; padding: 0 9px; justify-content: space-between; }
.menus a:nth-child(-n+4) { margin-right: 4px; }
.rtabs { height: 19px; display: flex; align-items: center; color: #bcc2c8; }
.tabs { width: 1054px; display: flex; justify-content: space-between; padding-left: 2px; }
.rtabs a { padding: 2px 7px 1px; }
.rtabs .on { background: #3b4453; color: #e3e6e9; }
.rtabs .geo { background: #0d6695; color: #d7ecf8; }
.pill { width: 13px; height: 5px; background: #f3f4f5; margin: 2px 4px 0 18px; }

.ribbon { height: 84px; display: flex; background: #3b4453; border-bottom: 2px solid #272f3b; }
.panel { display: flex; flex-direction: column; justify-content: space-between; border-right: 1px solid #2b333f; flex: none; }
.panel h2 { display: flex; align-items: center; justify-content: center; gap: 5px; height: 17px; padding-top: 1px; color: #dcdfe2; }
.body { display: flex; padding-top: 2px; }
.grid { display: grid; grid-template-rows: repeat(3, 20px); grid-auto-flow: column; row-gap: 1px; padding-top: 3px; justify-content: start; }
.grid button { display: flex; align-items: center; gap: 4px; }
.grid .c { margin-left: 2px; }
.large { display: flex; flex-direction: column; align-items: center; line-height: 13px; }
.large svg { width: 28px; height: 28px; margin: 2px 0 3px; }
.palettes { width: 94px; }
.palettes .large { width: 49px; height: 60px; margin-left: 2px; }
.palettes .on { border: 1px solid #5a9cc6; background: #40617f; }
.six { display: grid; grid-template: repeat(3, 19px) / 20px 20px; gap: 1px; padding-left: 1px; }
.six button { display: grid; place-items: center; }
.explore { width: 46px; }
.explore .large { width: 45px; }
.ground { width: 109px; }
.ground .body { padding-left: 21px; }
.design { width: 267px; }
.design .body { padding-left: 4px; grid-template-columns: 90px 80px 92px; }
.design .c { margin-left: 0; }
.views { width: 112px; }
.views .body { padding-left: 11px; }
.draw { width: 99px; }
.draw .body { padding-left: 4px; grid-template-columns: 32px 32px 32px; }
.modify { width: 210px; }
.modify .body { padding-left: 4px; grid-template-columns: 60px 60px 62px 20px; }
.modify .split .c { margin-left: auto; margin-right: 9px; }
.layers { width: 228px; }
.layers .large { width: 52px; }
.stack { display: flex; flex-direction: column; gap: 3px; flex: 1; padding-right: 2px; padding-top: 1px; }
.layersel { height: 18px; background: #485163; display: flex; align-items: center; gap: 3px; padding: 0 2px 0 3px; border: 1px solid #525c6e; }
.layersel svg { width: 13px; height: 13px; }
.layersel select { flex: 1; height: 16px; padding-left: 2px; }
.swatch { width: 11px; height: 11px; background: #fff; border: 1px solid #222; }
.icons { display: flex; gap: 6px; padding-left: 3px; height: 18px; }
.icons button { display: flex; align-items: center; gap: 4px; }
.clip { width: 68px; border: 0; }
.clip .large { width: 45px; }
.clip .large .c { margin-top: 4px; }
.clip .grid { padding-top: 1px; }

.filetabs { height: 22px; display: flex; background: #2a323e; padding-left: 8px; color: #b0b7be; }
.filetabs a { display: flex; align-items: center; justify-content: space-between; width: 102px; padding: 0 5px 0 14px; background: #313a47; border-radius: 6px 6px 0 0; border-left: 1px solid #272f3a; }
.filetabs .start { width: 106px; padding-left: 17px; }
.filetabs .long { width: 217px; }
.filetabs .on { background: #3b4453; color: #fff; font-weight: 600; }
.filetabs svg { width: 9px; height: 9px; }
.filetabs button { padding: 0 16px; }

.work { flex: 1; display: flex; min-height: 0; }
.toolspace { width: 215px; display: flex; background: #3b4453; }
.pane { width: 194px; display: flex; flex-direction: column; padding-bottom: 5px; }
.pane h1 { height: 21px; display: flex; align-items: center; background: #2b333f; color: #e3e6e8; }
.pane h1 i { width: 3px; height: 7px; border: 1px solid #7b848f; margin: 0 4px; }
.tsbar { height: 23px; display: flex; align-items: center; gap: 7px; padding: 0 4px 0 3px; }
.green { width: 13px; height: 13px; background: #43c470; border: 2px solid #dce7df; }
.push { margin-left: auto; }
.view { height: 16px; display: flex; align-items: center; background: #e6e6e6; color: #111; font-size: 9px; padding: 0 5px 0 2px; border-bottom: 1px solid #777; }
.view select { flex: 1; height: 14px; }
.chev { width: 5px; height: 5px; border: solid #333; border-width: 0 1px 1px 0; }
.down { transform: rotate(45deg); }
.up { transform: rotate(225deg); }
.left { transform: rotate(135deg); }
.right { transform: rotate(-45deg); }
.treebox { flex: 1; display: flex; margin-top: 2px; min-height: 0; background: #fff; }
.tree { flex: 1; min-width: 0; color: #111; height: 329px; overflow: hidden; padding-top: 2px; }
.tree li { height: 16px; display: flex; align-items: center; gap: 5px; }
.l0 { padding-left: 7px; }
.l1 { padding-left: 24px; }
.l2 { padding-left: 40px; }
.l3 { padding-left: 57px; }
.l1 { background: linear-gradient(#bbb, #bbb) 11px 0 / 1px 16px no-repeat; }
.l2 { background: linear-gradient(#bbb, #bbb) 11px 0 / 1px 16px no-repeat, linear-gradient(#bbb, #bbb) 28px 0 / 1px 16px no-repeat; }
.l3 { background: linear-gradient(#bbb, #bbb) 11px 0 / 1px 16px no-repeat, linear-gradient(#bbb, #bbb) 28px 0 / 1px 16px no-repeat, linear-gradient(#bbb, #bbb) 44px 0 / 1px 16px no-repeat; }
.e { flex: none; width: 8px; height: 8px; border: 1px solid #999; background: linear-gradient(#444, #444) center / 4px 1px no-repeat #fff; }
.e.p { background: linear-gradient(#444, #444) center / 4px 1px no-repeat, linear-gradient(#444, #444) center / 1px 4px no-repeat, #fff; }
.e.n { border: 0; background: linear-gradient(#bbb, #bbb) 4px 4px / 8px 1px no-repeat; }
.f { width: 14px; height: 12px; background: linear-gradient(135deg, #db9832 3px, transparent 3px); margin-left: -4px; }
.sel { background: #9b9b9b; height: 15px; line-height: 15px; flex: 1; padding-left: 3px; margin: 0 3px 0 -3px; }
.vbar { width: 12px; background: #efefef; display: flex; flex-direction: column; align-items: center; justify-content: space-between; padding: 9px 0 6px; }
.vbar span { width: 12px; height: 162px; background: #c9c9c9; margin: -147px 0 0; }
.hbar { height: 15px; background: #efefef; display: flex; align-items: center; padding: 0 20px 0 6px; }
.hbar span { height: 13px; width: 133px; background: #c9c9c9; margin: 0 20px 0 4px; }
.preview { height: 67px; margin-top: 4px; border: 1px solid #8c949e; border-left: 0; }
.side { width: 18px; display: flex; flex-direction: column; padding: 21px 0 37px; }
.side button { flex: 1; writing-mode: vertical-rl; transform: rotate(180deg); background: #2a323e; color: #aab2ba; line-height: 17px; }
.side .on { background: #3b4453; color: #d3d7db; }

.center { flex: 1; min-width: 0; display: flex; flex-direction: column; }
.upper { flex: 1; display: flex; }
.canvas { flex: 1; min-width: 0; position: relative; background: #000; border-top: 1px solid #333c48; }
.vp { position: absolute; left: 2px; top: 2px; color: #c8cccf; }
#plot { width: 100%; height: auto; }
#plot text { font: 8px "Liberation Sans Narrow", "Roboto", sans-serif; fill: #f58a8a; }
.cube { position: absolute; right: 9px; top: 8px; width: 80px; height: 82px; display: grid; grid-template: 15px 52px 15px / 14px 52px 14px; place-items: center; font: bold 12px "Liberation Sans", sans-serif; color: #a9a9a9; }
.cube::before { content: ""; box-sizing: border-box; position: absolute; left: 4px; top: 5px; width: 72px; height: 72px; border: 7px solid #303030; border-radius: 50%; }
.cube > * { position: relative; }
.cube .n { grid-area: 1 / 2; }
.cube .w { grid-area: 2 / 1; }
.cube .ea { grid-area: 2 / 3; }
.cube .s { grid-area: 3 / 2; }
.cube button { grid-area: 2 / 2; width: 31px; height: 31px; background: #a9afad; color: #555; font-size: 8px; }
.wcs { position: absolute; right: 31px; top: 103px; width: 38px; height: 14px; padding-left: 3px; background: #858589; border-radius: 3px; color: #ddd; font: 9px "Liberation Sans", sans-serif; text-align: left; }
.navbar { position: absolute; right: 1px; top: 136px; width: 28px; height: 174px; background: #4a4a4a; border-radius: 3px; }
.navbar svg { width: 28px; height: 174px; }
.rbar { width: 25px; background: #303a48; border-left: 2px solid #505760; border-right: 2px solid #28313c; padding-top: 3px; display: flex; flex-direction: column; align-items: center; }
.rbar svg { flex: 1 1 12px; min-height: 0; padding: 2px 0; }
.rbar hr { width: 17px; height: 2px; margin: 1px 0; background: #e5e7e9; flex: none; }
.grip { width: 12px; height: 4px; background: radial-gradient(#b8bfc6 1px, transparent 1px) 0 0 / 3px 2px; }

.cmd { height: 52px; display: flex; background: #2a323e; border-top: 1px solid #555; font: 10px/12px "DejaVu Sans Mono", monospace; }
.cmdtools { width: 20px; display: flex; flex-direction: column; align-items: center; gap: 7px; padding-top: 3px; }
.cmdtools svg { width: 11px; height: 11px; }
.cmdmain { flex: 1; display: flex; flex-direction: column; }
.history { flex: 1; background: #c8c8c8; color: #222; padding: 7px 2px 0; border-bottom: 2px solid #8d8d8d; }
.history p { height: 13px; }
.entry { height: 16px; margin-bottom: 2px; background: #fff; display: flex; align-items: center; gap: 2px; padding-left: 3px; color: #333; }
.entry .c { border-top-color: #555; }
.entry input { flex: 1; padding-left: 3px; height: 14px; }
.entry input::placeholder { color: #777; font-style: italic; opacity: 1; }

.layouts { height: 18px; display: flex; color: #a4acb4; padding-left: 9px; }
.layouts a { padding: 0 8px; background: #2d3642; border-radius: 0 0 6px 6px; margin-right: 1px; }
.layouts .on { color: #fff; font-weight: 700; background: #3b4453; padding: 0 9px; }
.layouts svg { width: 8px; height: 8px; margin: 0 9px; }
.status { height: 21px; display: flex; justify-content: flex-end; gap: 1px; }
.status > div { display: flex; align-items: center; background: #343d4a; }
.status button { width: 20px; height: 20px; display: grid; place-items: center; }
.status .wide button { width: 21px; }
.status .on { background: #5583ad; }
.status .txt { width: auto; padding: 0 4px; color: #e3e6e8; }
.status .c { margin: 0 4px; }
.status svg { width: 13px; height: 13px; }
```

FILE: app.js
```js
const plot = document.getElementById('plot');
const out = [];
const line = (x1, y1, x2, y2, c = '#b4b8b4', w = 1) => out.push(`<path d="M${x1} ${y1}L${x2} ${y2}" stroke="${c}" stroke-width="${w}" fill="none"/>`);
const vtext = (x, y, s) => out.push(`<text transform="translate(${x} ${y}) rotate(-90)">${s}</text>`);
const poly = (pts, c) => out.push(`<polyline points="${pts}" fill="none" stroke="${c}"/>`);

const profile = [[0,175],[10,176],[28,177],[62,177],[83,174],[114,168],[132,162],[158,149],[165,148],[192,147],[206,152],[217,157],[227,161],[260,164],[295,168],[331,175],[347,175],[367,172],[379,167],[399,158],[407,154],[419,149],[431,149],[451,150],[463,150],[468,158],[480,170],[503,181],[519,186],[548,188],[559,189],[580,191],[593,191],[606,189],[631,189],[648,179],[657,177],[683,166],[709,150],[727,141],[736,129],[777,129],[787,142]];
const levelAt = x => {
  for (let i = 1; i < profile.length; i++) {
    const [a, b] = profile[i - 1], [c, d] = profile[i];
    if (x <= c) return b + (d - b) * (x - a) / (c - a);
  }
  return 142;
};

/* ordinates from the profile to the data band */
const wide = new Set([28, 36, 62, 88, 114, 132, 260, 468, 476, 503, 528, 554, 580, 606, 631, 648, 787]);
const ordinate = (x, y1, y2) => wide.has(x) ? line(x, y1, x, y2, '#858885', 2) : line(x + .5, y1, x + .5, y2);
[10,28,36,62,83,88,109,114,132,139,158,165,192,206,217,227,243,260,269,295,301,321,331,347,367,373,379,399,407,419,424,431,451,463,468,476,480,503,519,528,548,554,559,580,593,606,631,648,657,683,703,709,727,736,761,777,787]
  .forEach(x => ordinate(x, Math.round(levelAt(x)), 334));
line(761.5, 110, 761.5, 129);

/* data band */
[[308, 787], [334, 787], [372, 802], [411, 787]].forEach(([y, x]) => line(0, y + .5, x, y + .5));
const stations = [
  [10,'2111.15','450.000'],[36,'2110.40','460.000'],[62,'2110.36','470.000'],[88,'2111.72','480.000'],[114,'2113.58','490.000'],[139,'2118.06','500.000'],[165,'2122.68','510.000'],[191,'2122.23','520.000'],[206,'2120.00','525.856'],[221,'2118.10','530.000',217],[243,'2115.57','540.000'],[269,'2115.20','550.000'],[295,'2113.86','560.000'],[321,'2112.01','570.000'],[347,'2111.25','580.000'],[373,'2112.96','590.000'],[399,'2117.51','600.000'],[424,'2121.68','610.000'],[439,'2122.00','612.505',431],[454,'2124.67','620.000',451],[476,'2114.47','630.000'],[502,'2109.17','640.000'],[528,'2106.82','650.000'],[548,'2106.00','657.489'],[562,'2105.69','660.000',554],[580,'2104.42','670.000'],[606,'2105.80','680.000'],[631,'2106.34','690.000'],[657,'2110.78','700.000'],[683,'2114.88','710.000'],[703,'2120.00','717.454'],[717,'2120.90','720.000',709],[736,'2128.97','730.000'],[761,'2136.20','740.000'],[787,'2124.01','750.000'],[802,'2124.00','750.136',787]];
stations.forEach(([x, level, chainage, from]) => {
  if (from) { line(from, 334, x, 342); line(x + .5, 342, x + .5, 411); }
  else ordinate(x, 334, 411);
  vtext(x - 3, 370, level);
  vtext(x - 3, 408, chainage);
});

/* arrowheads meeting at each grade break */
[28,83,109,132,158,193,227,260,301,331,367,379,399,407,419,463,468,480,503,519,559,593,631,648,683,709,727,736,777,787]
  .forEach(x => out.push(`<path d="M${x} 309L${x - 14} 306v5zM${x} 309L${x + (x > 780 ? 4 : 14)} 306v5z" fill="#d3d6cf"/>`));
[[56,'4.06%'],[96,'17.13%'],[120,'36.19%'],[144,'51.02%'],[175,'4.48%'],[210,'-39.81%'],[243,'-12.41%'],[281,'-11.63%'],[316,'-17.16%'],[349,'6.28%'],[371,'39.81%'],[388,'51.60%'],[396,'60.82%'],[404,'38.12%'],[415,'11.56%'],[441,'-1.27%'],[461,'139.04%'],[480,'60.68%'],[498,'46.68%'],[515,'22.37%'],[541,'11.00%'],[576,'-3.03%'],[612,'6.45%'],[637,'56.74%'],[666,'36.90%'],[694,'61.29%'],[712,'50.53%'],[732,'134.44%'],[759,'1.23%'],[784,'133.93%']]
  .forEach(([x, s]) => out.push(`<text x="${x}" y="304" text-anchor="middle">${s}</text>`));

/* ground and design curves */
poly(profile, '#9fcdb8');
poly([[158,149],[165,145],[172,143],[183,144],[192,147]], '#79963f');
poly([[419,149],[430,147],[438,143],[445,141],[452,141],[458,144],[463,150]], '#79963f');
poly([[736,129],[746,115],[756,110],[761,110],[769,115],[774,122],[777,129],[781,139],[787,142]], '#79963f');
poly([[42,178],[62,178],[70,177]], '#79963f');
poly([[571,191],[583,193],[593,191]], '#79963f');
poly([[618,189],[624,192],[631,189]], '#79963f');
poly([[657,177],[670,173],[683,166]], '#79963f');
line(160, 148.5, 190, 148.5, '#7189b5');
line(436, 150.5, 462, 150.5, '#7189b5');
line(736, 129.5, 777, 129.5, '#7189b5');

/* slope tags along the curve */
[[55,170,0],[95,167,-12],[119,161,-18],[142,151,-28],[175,142,0],[212,149,22],[244,157,5],[281,161,5],[317,166,8],[348,168,0],[371,164,-20],[387,158,-28],[398,152,-30],[411,146,-12],[441,144,0],[469,150,52],[477,159,50],[494,170,25],[513,178,15],[540,182,5],[576,185,0],[611,184,0],[636,178,-28],[664,166,-18],[693,153,-28],[714,141,-28],[726,132,-52],[756,124,0],[786,132,58]]
  .forEach(([x, y, a]) => out.push(`<g transform="translate(${x} ${y}) rotate(${a})"><path d="M-5-2H5V2H-5z" fill="#d9565f"/><path d="M-4-1h2M-1-1h2M2-1h2M-3 1h2M0 1h2M3 1h1" stroke="#ffb0b2" stroke-width=".8"/><path d="M-2-2v3M1-1v3M4-2v2" stroke="#4c161c"/></g>`));

/* end-of-profile callout */
line(787.5, 37, 787.5, 142, '#b87878');
vtext(784, 127, 'CH 750 136, RL 2124 000');

/* crosshair and UCS icon */
line(409, 158.5, 475, 158.5, '#a5a5a5');
line(441.5, 126, 441.5, 190, '#c8c8c8');
out.push('<path d="M439.5 156.500h4v4h-4z" fill="#000" stroke="#fff"/>');
out.push('<path d="M8.500 415.500h7v7h-7zM11.500 419V378M11 419.500H52M13 365l4 4 5-4M17.500 369v5M56 409l10 9M66 409l-10 9" fill="none" stroke="#d0d0d0"/>');
plot.innerHTML = out.join('');
```
